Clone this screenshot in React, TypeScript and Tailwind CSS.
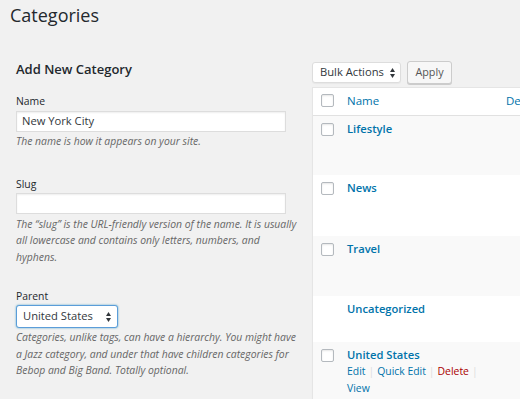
import React from "react";

function Checkbox() {
  return (
    <span className="block w-[13px] h-[13px] border border-[#b4b9be] bg-white rounded-[2px] shadow-[inset_0_1px_2px_rgba(0,0,0,0.1)]" />
  );
}

function Arrows() {
  return (
    <svg width="5" height="10" viewBox="0 0 5 10" className="shrink-0">
      <path d="M2.5 0 L5 4 L0 4 Z" fill="#32373c" />
      <path d="M0 6 L5 6 L2.5 10 Z" fill="#32373c" />
    </svg>
  );
}

function Sep() {
  return <span className="text-[#ddd] px-[3px]">|</span>;
}

function Row({
  name,
  bg,
  h,
  check = true,
  actions,
}: {
  name: string;
  bg: string;
  h: string;
  check?: boolean;
  actions?: React.ReactNode;
}) {
  return (
    <div className={`flex ${bg} ${h}`}>
      <div className="w-[34px] pl-[8px] pt-[7px] shrink-0">{check ? <Checkbox /> : null}</div>
      <div className="w-[163px] pt-[4px] shrink-0">
        <div className="text-[11.2px] leading-[17px] font-semibold text-[#0073aa]">{name}</div>
        {actions}
      </div>
      <div className="flex-1" />
    </div>
  );
}

export default function App() {
  return (
    <div className="w-[520px] h-[399px] bg-[#f1f1f1] overflow-hidden font-['Open_Sans',sans-serif] text-[#23282d]">
      <h1 className="pl-[10px] pt-[3px] text-[18px] leading-[24px] font-normal">Categories</h1>
      <div className="flex mt-[33px]">
        <div className="w-[306px] shrink-0 pl-[16px]">
          <h2 className="text-[13px] leading-[18px] font-semibold">Add New Category</h2>
          <div className="mt-[16px] text-[10.4px] leading-[15px]">Name</div>
          <div className="mt-[2px] w-[270px] h-[21px] bg-white border border-[#ddd] shadow-[inset_0_1px_2px_rgba(0,0,0,0.07)] flex items-center pl-[5px] text-[11.2px] text-[#32373c]">
            New York City
          </div>
          <p className="mt-[1px] italic text-[10.4px] leading-[16.5px] text-[#666]">
            The name is how it appears on your site.
          </p>
          <div className="mt-[27px] text-[10.4px] leading-[15px]">Slug</div>
          <div className="mt-[1px] w-[270px] h-[21px] bg-white border border-[#ddd] shadow-[inset_0_1px_2px_rgba(0,0,0,0.07)]" />
          <p className="mt-[2px] italic text-[10.4px] leading-[16.5px] text-[#666]">
            The “slug” is the URL-friendly version of the name. It is usually
            <br />
            all lowercase and contains only letters, numbers, and
            <br />
            hyphens.
          </p>
          <div className="mt-[24px] text-[10.4px] leading-[15px]">Parent</div>
          <div className="mt-[1px] w-[102px] h-[23px] bg-white border border-[#5b9dd9] rounded-[3px] shadow-[0_0_2px_rgba(30,140,190,0.8)] flex items-center justify-between pl-[6px] pr-[6px] text-[11.2px] text-[#32373c]">
            <span>United States</span>
            <Arrows />
          </div>
          <p className="mt-[1px] italic text-[10.4px] leading-[16.5px] text-[#666]">
            Categories, unlike tags, can have a hierarchy. You might have
            <br />
            a Jazz category, and under that have children categories for
            <br />
            Bebop and Big Band. Totally optional.
          </p>
        </div>
        <div className="flex-1 pl-[6px]">
          <div className="mt-[1px] flex items-center gap-[6px] h-[23px]">
            <div className="w-[89px] h-[21px] bg-white border border-[#ddd] rounded-[3px] shadow-[0_1px_1px_rgba(0,0,0,0.04)] flex items-center justify-between pl-[7px] pr-[5px] text-[11.2px] text-[#32373c]">
              <span>Bulk Actions</span>
              <Arrows />
            </div>
            <div className="w-[45px] h-[23px] bg-[#f7f7f7] border border-[#ccc] rounded-[3px] shadow-[0_1px_0_#ccc] flex items-center justify-center text-[10.8px] text-[#555]">
              Apply
            </div>
          </div>
          <div className="mt-[3px] w-[260px] border border-[#e5e5e5] border-r-0 shadow-[0_1px_1px_rgba(0,0,0,0.04)] overflow-hidden">
            <div className="flex bg-white h-[28px] border-b border-[#e1e1e1]">
              <div className="w-[34px] pl-[8px] pt-[6px] shrink-0">
                <Checkbox />
              </div>
              <div className="w-[159px] pt-[5px] shrink-0 text-[11.5px] leading-[16px] text-[#0073aa]">Name</div>
              <div className="pt-[5px] text-[11.5px] leading-[16px] text-[#0073aa] whitespace-nowrap">Description</div>
            </div>
            <Row name="Lifestyle" bg="bg-[#f9f9f9]" h="h-[59px]" />
            <Row name="News" bg="bg-white" h="h-[61px]" />
            <Row name="Travel" bg="bg-[#f9f9f9]" h="h-[60px]" />
            <Row name="Uncategorized" bg="bg-white" h="h-[46px]" check={false} />
            <Row
              name="United States"
              bg="bg-[#f9f9f9]"
              h="h-[60px]"
              actions={
                <div className="text-[10.4px] leading-[16.5px] text-[#0073aa]">
                  <span>Edit</span>
                  <Sep />
                  <span>Quick Edit</span>
                  <Sep />
                  <span className="text-[#a00]">Delete</span>
                  <Sep />
                  <br />
                  <span>View</span>
                </div>
              }
            />
          </div>
        </div>
      </div>
    </div>
  );
}
